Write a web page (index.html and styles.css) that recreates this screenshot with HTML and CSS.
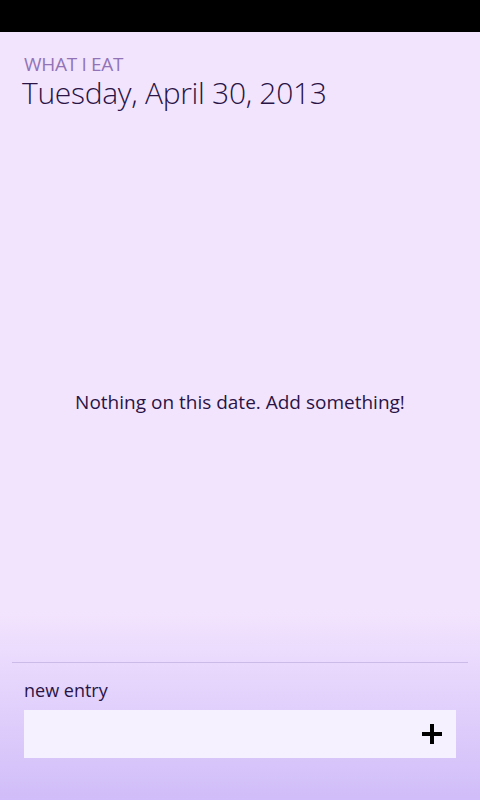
FILE: index.html
```html
<!DOCTYPE html>
<html>
<head>
<meta charset="utf-8">
<link rel="stylesheet" href="styles.css">
</head>
<body>
<div class="status"></div>
<div class="page">
  <header class="head">
    <div class="app-title">WHAT I EAT</div>
    <div class="page-title">Tuesday, April 30, 2013</div>
  </header>
  <main class="content">
    <p class="empty">Nothing on this date. Add something!</p>
  </main>
  <footer class="entry">
    <div class="divider"></div>
    <div class="label">new entry</div>
    <div class="box">
      <svg class="plus" width="20" height="20" viewBox="0 0 20 20"><path d="M8 0h4v8h8v4h-8v8h-4v-8H0V8h8z" fill="#000"/></svg>
    </div>
  </footer>
</div>
</body>
</html>
```
FILE: styles.css
```css
html, body { margin: 0; padding: 0; }
body {
  width: 480px; height: 800px; overflow: hidden;
  font-family: "Open Sans", "Noto Sans", sans-serif;
  background: #f3e4fe;
}
.status { height: 32px; background: #000; }
.page {
  height: 768px;
  display: flex; flex-direction: column;
  background: linear-gradient(to bottom, #f3e4fe 0px, #f3e4fe 578px, #d0bdf9 768px);
}
.head { padding: 22px 0 0 22px; }
.app-title {
  font-size: 19px; color: #9274b6; line-height: 20px; padding-left: 2px;
  letter-spacing: -0.3px;
}
.page-title {
  font-size: 30px; font-weight: 300; color: #2a1446; line-height: 34px;
  letter-spacing: -0.3px; margin-top: 2px;
}
.content { flex: 1; display: flex; align-items: center; justify-content: center; }
.empty { margin: 0; font-size: 19px; color: #2a1446; padding-top: 32px; }
.entry { padding: 0 12px 42px; }
.divider { height: 1px; background: #cbbbe9; }
.label { margin: 14px 12px 0; font-size: 18px; color: #2a1446; line-height: 26px; }
.box {
  margin: 7px 12px 0; height: 48px; background: #f5f1fe;
  display: flex; align-items: center; justify-content: flex-end; padding-right: 14px;
}
```
